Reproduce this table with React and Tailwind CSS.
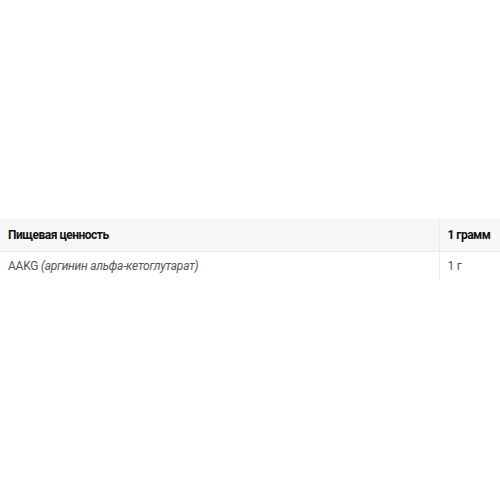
export default function App() {
  return (
    <div className="h-[500px] w-[500px] bg-white pt-[219px] font-['Roboto',sans-serif]">
      <table className="w-full table-fixed border-collapse text-[12px]">
        <colgroup>
          <col />
          <col className="w-[61px]" />
        </colgroup>
        <thead>
          <tr className="bg-[#f7f7f8] border-b border-[#ebebeb]">
            <th className="h-[32px] px-2 text-left font-bold tracking-[-0.5px] text-[#111] whitespace-nowrap">Пищевая ценность</th>
            <th className="h-[32px] px-2 text-left font-bold tracking-[-0.5px] text-[#111] whitespace-nowrap border-l border-[#ebebeb]">1 грамм</th>
          </tr>
        </thead>
        <tbody>
          <tr>
            <td className="h-[29px] px-2 tracking-[-0.25px] text-[#555] whitespace-nowrap">
              AAKG <em>(аргинин альфа-кетоглутарат)</em>
            </td>
            <td className="h-[29px] px-2 tracking-[-0.25px] text-[#555] whitespace-nowrap border-l border-[#ebebeb]">1 г</td>
          </tr>
        </tbody>
      </table>
    </div>
  );
}
